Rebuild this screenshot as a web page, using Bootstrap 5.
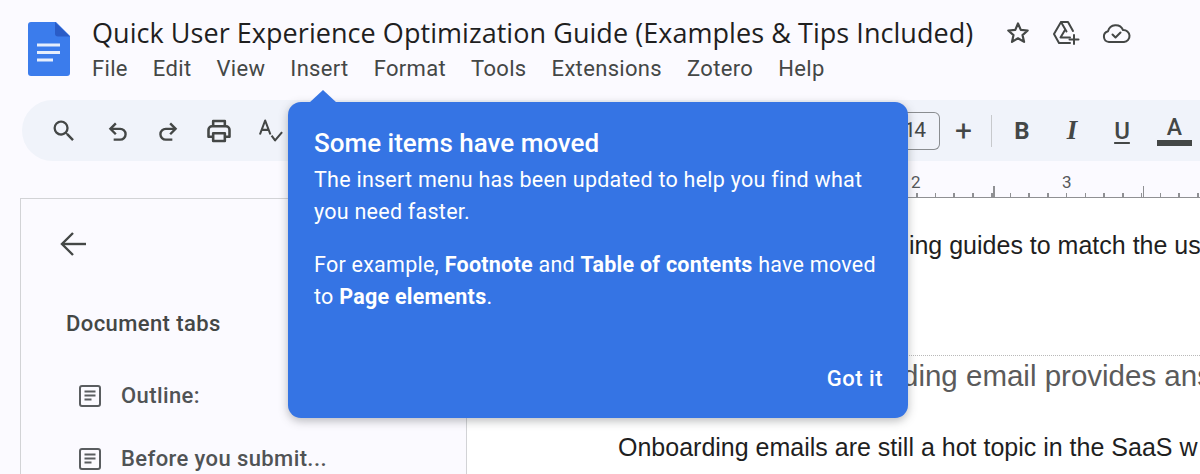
<!DOCTYPE html>
<html lang="en">
<head>
<meta charset="utf-8">
<title>Quick User Experience Optimization Guide</title>
<link rel="stylesheet" href="https://cdn.jsdelivr.net/npm/bootstrap@5.3.0/dist/css/bootstrap.min.css">
<style>
html,body{height:474px;overflow:hidden}
body{background:#fbfaff;font-family:Roboto,"Noto Sans",sans-serif;color:#444746;width:1200px;position:relative}
.doc-head{height:100px;padding:22px 0 0 28px}
.doc-logo{width:42px;height:54px;flex:none}
.doc-head-main{margin-left:22px;min-width:0;margin-top:-2px}
.doc-title{font-family:"Open Sans",Roboto,sans-serif;font-size:27px;line-height:22px;color:#1f1f1f;margin:0;white-space:nowrap;letter-spacing:.05px}
.title-icons{gap:22px;margin-left:33px}
.menu-row{gap:25px;margin-top:10px;font-size:22px;line-height:26px;color:#444746;letter-spacing:.33px}
.tool-pill{height:61px;margin-left:22px;background:#f0f3fa;border-radius:31px 0 0 31px;padding-left:28px;overflow:hidden}
.tool-left{gap:24px}
.tool-search{margin-right:3px}
.tool-right{margin-left:auto;padding-right:8px}
.size-box{width:60px;height:38px;border:1.5px solid #8a8d90;border-radius:6px;border-left:0;font-size:21px;letter-spacing:-1.5px;display:flex;align-items:center;justify-content:flex-end;padding-right:14px;margin-right:14px;color:#444746}
.tool-plus{font-size:30px;font-weight:400;line-height:1;width:20px;text-align:center;margin-right:17px}
.tool-sep{width:1.5px;height:32px;background:#c7c9cc;margin-right:18px}
.tool-b,.tool-i,.tool-u{font-size:24px;line-height:1;color:#444746;width:24px;text-align:center}
.tool-b{font-weight:700;margin-right:26px}
.tool-i{font-family:"Liberation Serif",serif;font-size:27px;font-style:italic;font-weight:700;margin-right:26px}
.tool-u{font-weight:500;text-decoration:underline;text-decoration-thickness:2px;text-underline-offset:3px;margin-right:23px}
.tool-a{width:35px;font-size:23px;line-height:24px;font-weight:500;text-align:center;border-bottom:6px solid #444746;height:30px;color:#444746}
.work{height:313px}
.side-panel{width:447px;margin-left:20px;margin-top:37px;border:1.5px solid #d2d3d6;border-bottom:0;padding:32px 0 0 38px;background:#fbfaff;flex:none;height:276px}
.side-title{font-size:22px;font-weight:500;line-height:26px;color:#444746;margin:54px 0 46px 7px;letter-spacing:.4px}
.side-item{display:flex;align-items:center;gap:19px;font-size:22px;line-height:26px;font-weight:500;color:#505355;margin:0 0 37px 19px;white-space:nowrap;letter-spacing:.4px}
.doc-col{flex:1;min-width:0;overflow:hidden}
.ruler{height:37px;background-color:#fbfaff;background-image:repeating-linear-gradient(90deg,transparent 0 76px,#8f9093 76px 77.5px,transparent 77.5px 150px),repeating-linear-gradient(90deg,#8f9093 0 1.5px,transparent 1.5px 18.75px),linear-gradient(#8f9093,#8f9093);background-size:100% 12px,100% 5px,100% 1px;background-position:0 bottom,-1px bottom,0 bottom;background-repeat:no-repeat;padding-left:444px;font-size:17px;line-height:20px;color:#55585a;padding-top:11px;white-space:nowrap}
.ruler-num{display:inline-block;width:151px}
.page-body{background:#fff;height:276px;font-family:"Liberation Sans",Arial,sans-serif;overflow:hidden;white-space:nowrap}
.line-a{font-size:25px;line-height:28px;color:#1f1f1f;padding:33px 0 0 428px}
.rule-dot{border-top:1.5px dotted #b9b9b9;margin:96px 0 0 0}
.line-h{font-size:29.500px;line-height:32px;color:#5b5b5b;padding:4px 0 0 435px}
.line-b{font-size:25px;line-height:28px;color:#1f1f1f;padding:41px 0 0 151px}
.hint{position:absolute;left:288px;top:102px;width:620px;height:316px;background:#3574e4;border-radius:13px;color:#fff;padding:25px 25px 0 26px;box-shadow:0 3px 10px rgba(60,64,67,.35);font-size:21.500px;line-height:32px;letter-spacing:.25px}
.hint::before{content:"";position:absolute;left:21px;top:-12px;width:0;height:0;border-left:14px solid transparent;border-right:14px solid transparent;border-bottom:13px solid #3574e4}
.hint h2{font-size:26px;line-height:32px;font-weight:500;margin:0 0 5px;color:#fff;letter-spacing:0}
.hint p{margin:0 0 21px}
.hint strong{font-weight:700}
.hint-btn{position:absolute;right:25px;bottom:23px;color:#fff;font-size:22px;font-weight:500;padding:0;border:0;background:none;line-height:32px;letter-spacing:.5px}
svg{display:block;flex:none}
</style>
</head>
<body>
<header class="doc-head d-flex">
  <svg class="doc-logo" viewBox="0 0 42 54"><path d="M3 0h25l14 14v37a3 3 0 0 1-3 3H3a3 3 0 0 1-3-3V3a3 3 0 0 1 3-3z" fill="#3b7cec"/><path d="M27 0l15 14.500H30a3 3 0 0 1-3-3z" fill="#2a5cc7"/><path d="M9 23h23M9 30.500h23M9 38h16" stroke="#e6eefc" stroke-width="3"/></svg>
  <div class="doc-head-main">
    <div class="d-flex align-items-center">
      <h1 class="doc-title">Quick User Experience Optimization Guide (Examples &amp; Tips Included)</h1>
      <div class="d-flex align-items-center title-icons">
        <svg width="24" height="24" viewBox="0 0 24 24" fill="none" stroke="#444746" stroke-width="2.200" stroke-linejoin="round"><path d="M12 2.500l2.800 6.400 6.900.6-5.200 4.600 1.600 6.800-6.100-3.600-6 3.600 1.500-6.800-5.200-4.600 7-.6z"/></svg>
        <svg width="28" height="26" viewBox="0 0 28 26" fill="none" stroke="#444746" stroke-width="2" stroke-linejoin="round" stroke-linecap="round"><path d="M9 2h7l5 9M9 2L2 14l5 9h11M9 2l5.500 9.500"/><path d="M13 10l-4.500 7.500h9.500"/><path d="M22 15v9M17.500 19.500h9"/></svg>
        <svg width="29" height="22" viewBox="0 0 29 22" fill="none" stroke="#444746" stroke-width="2" stroke-linecap="round" stroke-linejoin="round"><path d="M7 20a5.500 5.500 0 0 1-1-10.800A8 8 0 0 1 21 8a6 6 0 0 1 1 12z"/><path d="M10.500 12.500l3 3 5-5"/></svg>
      </div>
    </div>
    <nav class="d-flex menu-row"><span>File</span><span>Edit</span><span>View</span><span>Insert</span><span>Format</span><span>Tools</span><span>Extensions</span><span>Zotero</span><span>Help</span></nav>
  </div>
</header>

<div class="tool-pill d-flex align-items-center">
  <div class="d-flex align-items-center tool-left">
    <svg class="tool-search" width="28" height="28" viewBox="0 0 24 24" fill="#444746"><path d="M15.500 14h-.79l-.28-.27A6.470 6.470 0 0 0 16 9.500 6.500 6.500 0 1 0 9.500 16c1.610 0 3.090-.59 4.230-1.570l.27.280v.79l5 4.990L20.490 19l-4.990-5zm-6 0C7.010 14 5 11.990 5 9.500S7.010 5 9.500 5 14 7.010 14 9.500 11.990 14 9.500 14z"/></svg>
    <svg width="26" height="26" viewBox="0 0 24 24" fill="none" stroke="#444746" stroke-width="2.200"><path d="M10 5L5 10l5 5"/><path d="M5 10h9a5 5 0 0 1 0 10H8"/></svg>
    <svg width="26" height="26" viewBox="0 0 24 24" fill="none" stroke="#444746" stroke-width="2.200"><path d="M14 5l5 5-5 5"/><path d="M19 10h-9a5 5 0 0 0 0 10h6"/></svg>
    <svg width="28" height="28" viewBox="0 0 24 24" fill="none" stroke="#444746" stroke-width="2.200" stroke-linejoin="round"><path d="M7 8V3.500h10V8"/><path d="M6.500 17H3v-6a3 3 0 0 1 3-3h12a3 3 0 0 1 3 3v6h-3.500"/><path d="M7 14h10v6.500H7z"/></svg>
    <svg width="28" height="28" viewBox="0 0 24 24" fill="none" stroke="#444746" stroke-width="1.800" stroke-linejoin="round"><path d="M2.500 15L7 3l4.500 12M4 11h6"/><path d="M12.500 16l3 4 6-7"/></svg>
  </div>
  <div class="d-flex align-items-center tool-right">
    <div class="size-box">14</div>
    <div class="tool-plus">+</div>
    <div class="tool-sep"></div>
    <div class="tool-b">B</div>
    <div class="tool-i">I</div>
    <div class="tool-u">U</div>
    <div class="tool-a">A</div>
  </div>
</div>

<div class="work d-flex">
  <aside class="side-panel">
    <svg width="28" height="26" viewBox="0 0 28 26" fill="none" stroke="#444746" stroke-width="2.400"><path d="M14 2L3 13l11 11"/><path d="M3 13h24"/></svg>
    <div class="side-title">Document tabs</div>
    <div class="side-item"><svg width="24" height="24" viewBox="0 0 24 24" fill="none" stroke="#5a5d60" stroke-width="2"><rect x="2" y="2" width="20" height="20" rx="2"/><path d="M6.500 7.500h11M6.500 11.500h11M6.500 15.500h7"/></svg>Outline:</div>
    <div class="side-item"><svg width="24" height="24" viewBox="0 0 24 24" fill="none" stroke="#5a5d60" stroke-width="2"><rect x="2" y="2" width="20" height="20" rx="2"/><path d="M6.500 7.500h11M6.500 11.500h11M6.500 15.500h7"/></svg>Before you submit...</div>
  </aside>
  <main class="doc-col">
    <div class="ruler"><span class="ruler-num">2</span><span class="ruler-num">3</span></div>
    <div class="page-body">
      <div class="line-a">ding guides to match the us</div>
      <div class="rule-dot"></div>
      <div class="line-h">ding email provides ans</div>
      <div class="line-b">Onboarding emails are still a hot topic in the SaaS w</div>
    </div>
  </main>
</div>

<section class="hint" role="dialog">
  <h2>Some items have moved</h2>
  <p>The insert menu has been updated to help you find what you need faster.</p>
  <p>For example, <strong>Footnote</strong> and <strong>Table of contents</strong> have moved to <strong>Page elements</strong>.</p>
  <button class="hint-btn" type="button">Got it</button>
</section>
<script src="https://cdn.jsdelivr.net/npm/bootstrap@5.3.0/dist/js/bootstrap.bundle.min.js"></script>
</body>
</html>
